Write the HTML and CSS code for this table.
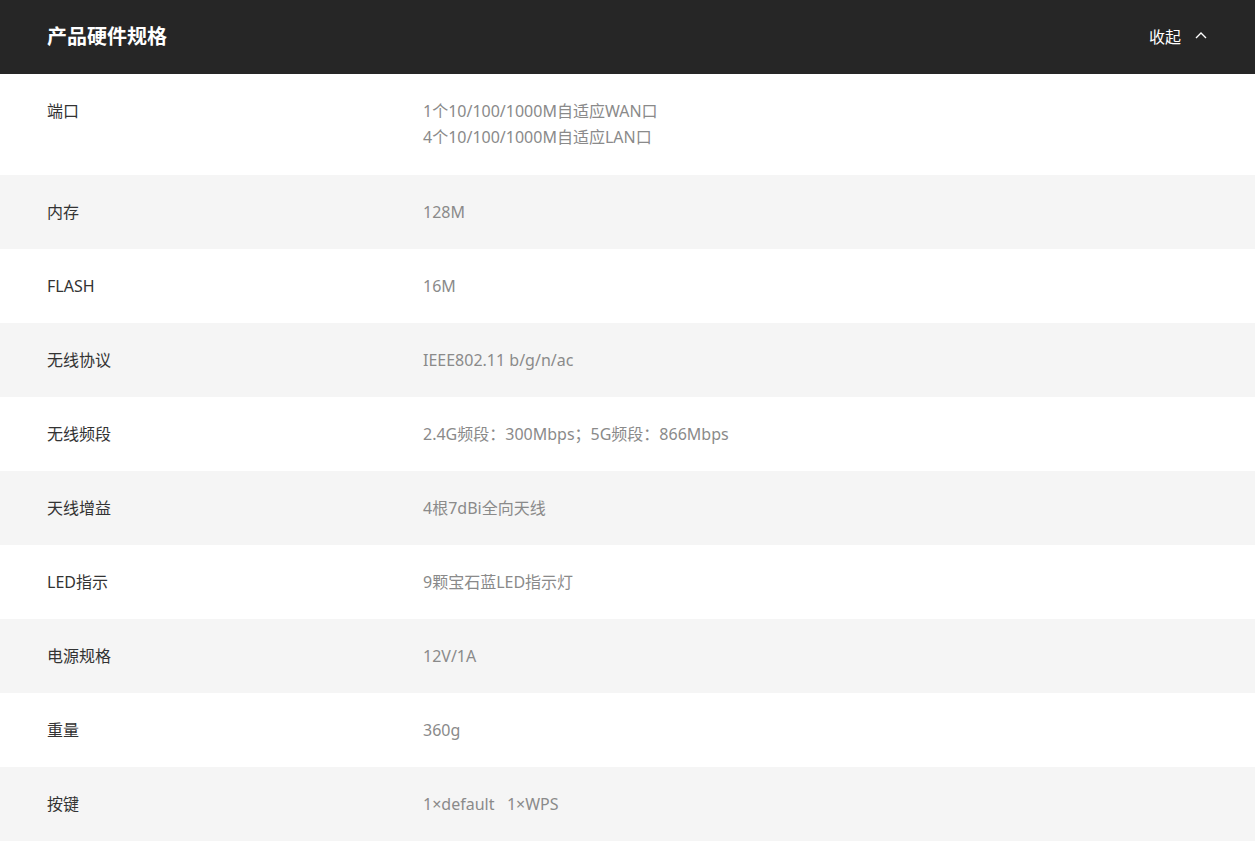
FILE: index.html
```html
<!DOCTYPE html>
<html lang="zh-CN">
<head>
<meta charset="utf-8">
<title>产品硬件规格</title>
<link rel="stylesheet" href="styles.css">
</head>
<body>
<section class="specs">
  <header class="specs-head">
    <h2 class="specs-title">产品硬件规格</h2>
    <button class="toggle">收起
      <svg class="chev" width="12" height="8" viewBox="0 0 12 8"><path d="M1 7 L6 2 L11 7" fill="none" stroke="#fff" stroke-width="1.4"/></svg>
    </button>
  </header>
  <div class="rows">
    <div class="row row-multi"><div class="label">端口</div><div class="value">1个10/100/1000M自适应WAN口<br>4个10/100/1000M自适应LAN口</div></div>
    <div class="row"><div class="label">内存</div><div class="value">128M</div></div>
    <div class="row"><div class="label">FLASH</div><div class="value">16M</div></div>
    <div class="row"><div class="label">无线协议</div><div class="value">IEEE802.11 b/g/n/ac</div></div>
    <div class="row"><div class="label">无线频段</div><div class="value">2.4G频段：300Mbps；5G频段：866Mbps</div></div>
    <div class="row"><div class="label">天线增益</div><div class="value">4根7dBi全向天线</div></div>
    <div class="row"><div class="label">LED指示</div><div class="value">9颗宝石蓝LED指示灯</div></div>
    <div class="row"><div class="label">电源规格</div><div class="value">12V/1A</div></div>
    <div class="row"><div class="label">重量</div><div class="value">360g</div></div>
    <div class="row"><div class="label">按键</div><div class="value">1×default&nbsp;&nbsp;&nbsp;1×WPS</div></div>
  </div>
</section>
</body>
</html>
```
FILE: styles.css
```css
html, body {
  margin: 0;
  padding: 0;
  background: #fff;
}
body {
  font-family: "Noto Sans", "Noto Sans CJK SC", sans-serif;
}
.specs-head {
  height: 74px;
  background: #262626;
  display: flex;
  align-items: center;
  justify-content: space-between;
  padding: 0 48px 0 47px;
  box-sizing: border-box;
}
.specs-title {
  margin: 0 0 4px;
  color: #fff;
  font-size: 20px;
  font-weight: 700;
  font-family: "Noto Sans CJK SC", sans-serif;
}
.toggle {
  background: none;
  border: 0;
  padding: 0;
  margin-bottom: 2px;
  color: #fff;
  font-size: 16px;
  font-family: "Noto Sans CJK SC", sans-serif;
  display: flex;
  align-items: center;
  gap: 14px;
  cursor: pointer;
}
.chev {
  display: block;
  margin-top: -3px;
}
.row {
  display: flex;
  padding: 24px 47px;
  line-height: 26px;
  font-size: 16px;
}
.row-multi {
  padding-bottom: 25px;
}
.row:nth-child(even) {
  background: #f5f5f5;
}
.label {
  width: 376px;
  flex: none;
  color: #333;
}
.value {
  color: #8a8a8a;
}
```
